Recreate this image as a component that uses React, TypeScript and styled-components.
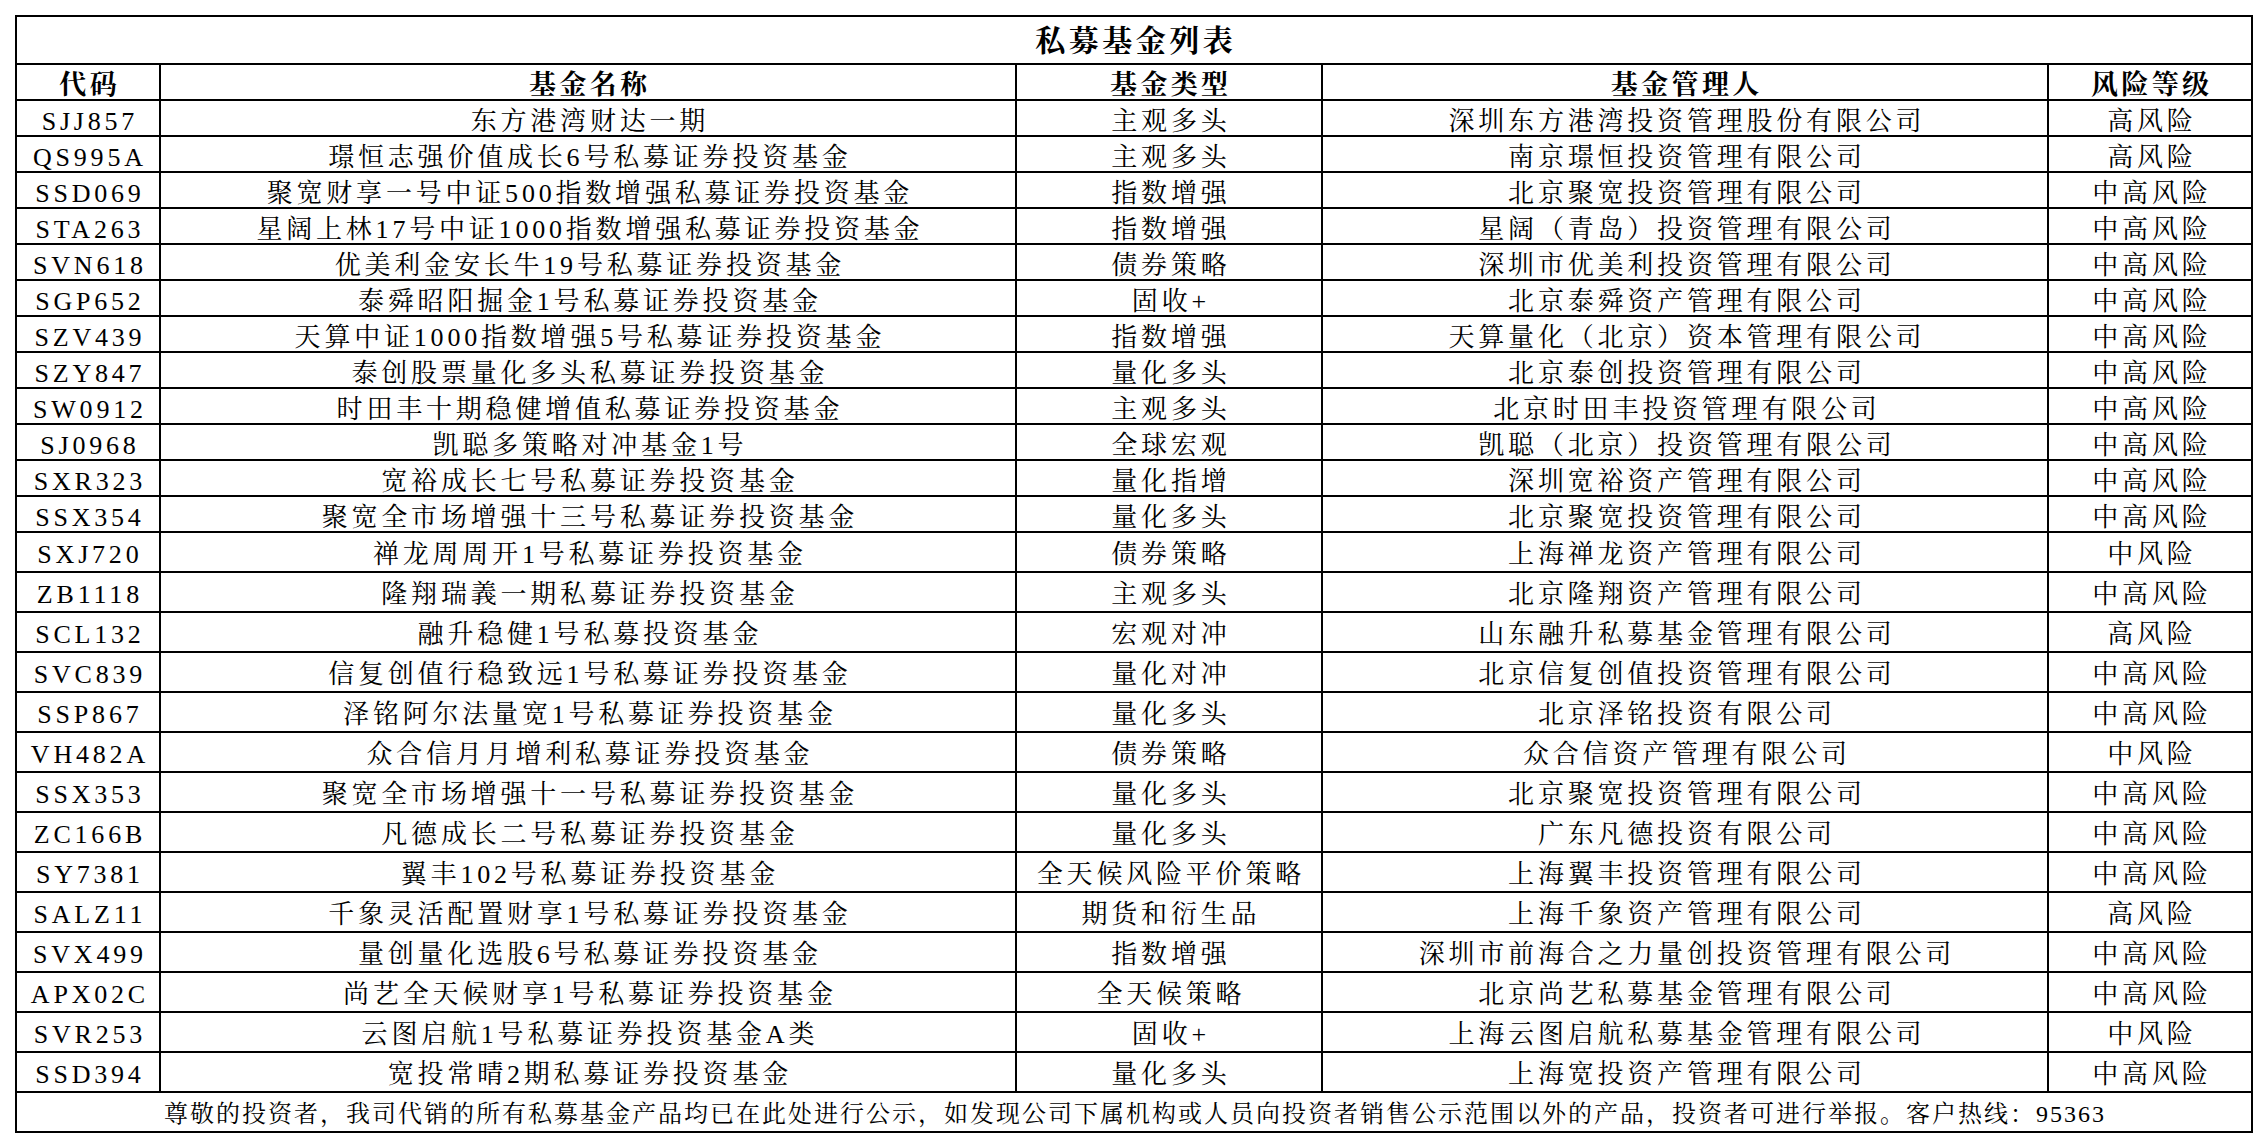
import styled, { createGlobalStyle } from "styled-components";

const GlobalStyle = createGlobalStyle`
  html, body {
    margin: 0;
    padding: 0;
    background: #fff;
  }
  * {
    box-sizing: border-box;
  }
`;

const FONT = `"Liberation Serif", "Noto Serif CJK SC", "Noto Sans CJK SC", serif`;

const Page = styled.div`
  padding: 15px 0 0 15px;
  font-family: ${FONT};
  color: #000;
`;

const Sheet = styled.div`
  display: inline-grid;
  grid-template-columns: 142px 854px 304px 724px 202px;
  grid-template-rows: 46px 34px repeat(12, 34px) repeat(14, 38px) 38px;
  gap: 2px;
  padding: 2px;
  background: #000;
`;

const BaseCell = styled.div`
  background: #fff;
  display: flex;
  align-items: flex-start;
  justify-content: center;
  white-space: nowrap;
  line-height: 1;
`;

const Title = styled(BaseCell)`
  grid-column: 1 / -1;
  padding-top: 9px;
  padding-left: 3.5px;
  font-size: 30px;
  font-weight: 700;
  letter-spacing: 3.5px;
`;

const HeadCell = styled(BaseCell)`
  padding-top: 7px;
  padding-left: 3.4px;
  font-size: 27px;
  font-weight: 700;
  letter-spacing: 3.4px;
`;

const Cell = styled(BaseCell)<{ $tall?: boolean }>`
  padding-top: ${(p) => (p.$tall ? 9 : 8)}px;
  padding-left: 3.8px;
  font-size: 26px;
  letter-spacing: 3.8px;
`;

const Footer = styled(BaseCell)`
  grid-column: 1 / -1;
  padding-top: 9px;
  padding-left: 2px;
  font-size: 24px;
  letter-spacing: 2px;
`;

type fundType = {
  code: string;
  name: string;
  kind: string;
  manager: string;
  risk: string;
};

const headers = ["代码", "基金名称", "基金类型", "基金管理人", "风险等级"];

const funds: fundType[] = [
  { code: "SJJ857", name: "东方港湾财达一期", kind: "主观多头", manager: "深圳东方港湾投资管理股份有限公司", risk: "高风险" },
  { code: "QS995A", name: "璟恒志强价值成长6号私募证券投资基金", kind: "主观多头", manager: "南京璟恒投资管理有限公司", risk: "高风险" },
  { code: "SSD069", name: "聚宽财享一号中证500指数增强私募证券投资基金", kind: "指数增强", manager: "北京聚宽投资管理有限公司", risk: "中高风险" },
  { code: "STA263", name: "星阔上林17号中证1000指数增强私募证券投资基金", kind: "指数增强", manager: "星阔（青岛）投资管理有限公司", risk: "中高风险" },
  { code: "SVN618", name: "优美利金安长牛19号私募证券投资基金", kind: "债券策略", manager: "深圳市优美利投资管理有限公司", risk: "中高风险" },
  { code: "SGP652", name: "泰舜昭阳掘金1号私募证券投资基金", kind: "固收+", manager: "北京泰舜资产管理有限公司", risk: "中高风险" },
  { code: "SZV439", name: "天算中证1000指数增强5号私募证券投资基金", kind: "指数增强", manager: "天算量化（北京）资本管理有限公司", risk: "中高风险" },
  { code: "SZY847", name: "泰创股票量化多头私募证券投资基金", kind: "量化多头", manager: "北京泰创投资管理有限公司", risk: "中高风险" },
  { code: "SW0912", name: "时田丰十期稳健增值私募证券投资基金", kind: "主观多头", manager: "北京时田丰投资管理有限公司", risk: "中高风险" },
  { code: "SJ0968", name: "凯聪多策略对冲基金1号", kind: "全球宏观", manager: "凯聪（北京）投资管理有限公司", risk: "中高风险" },
  { code: "SXR323", name: "宽裕成长七号私募证券投资基金", kind: "量化指增", manager: "深圳宽裕资产管理有限公司", risk: "中高风险" },
  { code: "SSX354", name: "聚宽全市场增强十三号私募证券投资基金", kind: "量化多头", manager: "北京聚宽投资管理有限公司", risk: "中高风险" },
  { code: "SXJ720", name: "禅龙周周开1号私募证券投资基金", kind: "债券策略", manager: "上海禅龙资产管理有限公司", risk: "中风险" },
  { code: "ZB1118", name: "隆翔瑞義一期私募证券投资基金", kind: "主观多头", manager: "北京隆翔资产管理有限公司", risk: "中高风险" },
  { code: "SCL132", name: "融升稳健1号私募投资基金", kind: "宏观对冲", manager: "山东融升私募基金管理有限公司", risk: "高风险" },
  { code: "SVC839", name: "信复创值行稳致远1号私募证券投资基金", kind: "量化对冲", manager: "北京信复创值投资管理有限公司", risk: "中高风险" },
  { code: "SSP867", name: "泽铭阿尔法量宽1号私募证券投资基金", kind: "量化多头", manager: "北京泽铭投资有限公司", risk: "中高风险" },
  { code: "VH482A", name: "众合信月月增利私募证券投资基金", kind: "债券策略", manager: "众合信资产管理有限公司", risk: "中风险" },
  { code: "SSX353", name: "聚宽全市场增强十一号私募证券投资基金", kind: "量化多头", manager: "北京聚宽投资管理有限公司", risk: "中高风险" },
  { code: "ZC166B", name: "凡德成长二号私募证券投资基金", kind: "量化多头", manager: "广东凡德投资有限公司", risk: "中高风险" },
  { code: "SY7381", name: "翼丰102号私募证券投资基金", kind: "全天候风险平价策略", manager: "上海翼丰投资管理有限公司", risk: "中高风险" },
  { code: "SALZ11", name: "千象灵活配置财享1号私募证券投资基金", kind: "期货和衍生品", manager: "上海千象资产管理有限公司", risk: "高风险" },
  { code: "SVX499", name: "量创量化选股6号私募证券投资基金", kind: "指数增强", manager: "深圳市前海合之力量创投资管理有限公司", risk: "中高风险" },
  { code: "APX02C", name: "尚艺全天候财享1号私募证券投资基金", kind: "全天候策略", manager: "北京尚艺私募基金管理有限公司", risk: "中高风险" },
  { code: "SVR253", name: "云图启航1号私募证券投资基金A类", kind: "固收+", manager: "上海云图启航私募基金管理有限公司", risk: "中风险" },
  { code: "SSD394", name: "宽投常晴2期私募证券投资基金", kind: "量化多头", manager: "上海宽投资产管理有限公司", risk: "中高风险" },
];

const App = () => {
  return (
    <Page>
      <GlobalStyle />
      <Sheet>
        <Title>私募基金列表</Title>
        {headers.map((h) => (
          <HeadCell key={h}>{h}</HeadCell>
        ))}
        {funds.map((fund, i) => {
          // rows after the twelfth are a bit taller in the sheet
          const tall = i >= 12;
          return [fund.code, fund.name, fund.kind, fund.manager, fund.risk].map(
            (value, j) => (
              <Cell key={`${fund.code}-${j}`} $tall={tall}>
                {value}
              </Cell>
            )
          );
        })}
        <Footer>
          尊敬的投资者，我司代销的所有私募基金产品均已在此处进行公示，如发现公司下属机构或人员向投资者销售公示范围以外的产品，投资者可进行举报。客户热线：95363
        </Footer>
      </Sheet>
    </Page>
  );
};

export default App;
